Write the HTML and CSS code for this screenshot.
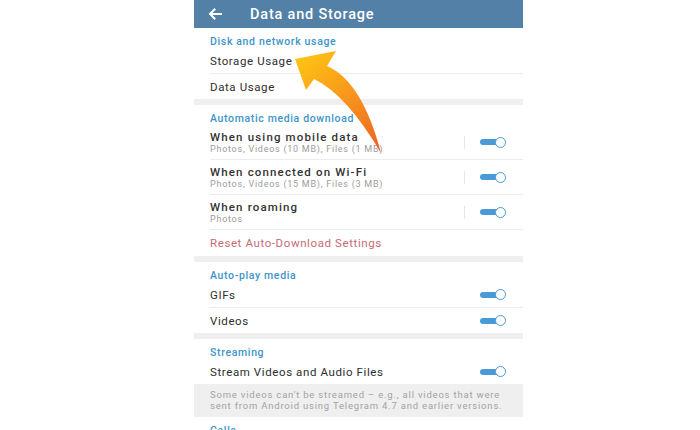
FILE: index.html
```html
<!DOCTYPE html>
<html>
<head>
<meta charset="utf-8">
<link rel="stylesheet" href="styles.css">
</head>
<body>
<div class="phone">
  <div class="appbar">
    <svg class="back" width="14" height="12" viewBox="0 0 14 12"><path d="M13 6H2M6.5 1.5L2 6l4.5 4.5" fill="none" stroke="#fff" stroke-width="2" stroke-linecap="square"/></svg>
    <span class="appbar-title">Data and Storage</span>
  </div>

  <div class="section">
    <div class="sec-title">Disk and network usage</div>
    <div class="row"><span class="label">Storage Usage</span></div>
    <div class="row last"><span class="label">Data Usage</span></div>
  </div>
  <div class="gap"></div>

  <div class="section">
    <div class="sec-title">Automatic media download</div>
    <div class="row two">
      <div class="texts"><div class="label">When using mobile data</div><div class="sub">Photos, Videos (10 MB), Files (1 MB)</div></div>
      <div class="ctrl"><span class="vsep"></span><span class="toggle"><span class="track"></span><span class="knob"></span></span></div>
    </div>
    <div class="row two">
      <div class="texts"><div class="label">When connected on Wi-Fi</div><div class="sub">Photos, Videos (15 MB), Files (3 MB)</div></div>
      <div class="ctrl"><span class="vsep"></span><span class="toggle"><span class="track"></span><span class="knob"></span></span></div>
    </div>
    <div class="row two">
      <div class="texts"><div class="label">When roaming</div><div class="sub">Photos</div></div>
      <div class="ctrl"><span class="vsep"></span><span class="toggle"><span class="track"></span><span class="knob"></span></span></div>
    </div>
    <div class="row reset last"><span class="label red">Reset Auto-Download Settings</span></div>
  </div>
  <div class="gap"></div>

  <div class="section">
    <div class="sec-title">Auto-play media</div>
    <div class="row">
      <span class="label">GIFs</span>
      <span class="toggle"><span class="track"></span><span class="knob"></span></span>
    </div>
    <div class="row last">
      <span class="label">Videos</span>
      <span class="toggle"><span class="track"></span><span class="knob"></span></span>
    </div>
  </div>
  <div class="gap"></div>

  <div class="section">
    <div class="sec-title">Streaming</div>
    <div class="row last">
      <span class="label">Stream Videos and Audio Files</span>
      <span class="toggle"><span class="track"></span><span class="knob"></span></span>
    </div>
  </div>
  <div class="info">Some videos can't be streamed – e.g., all videos that were<br>sent from Android using Telegram 4.7 and earlier versions.</div>

  <div class="section">
    <div class="sec-title calls">Calls</div>
  </div>
</div>

<svg class="arrow" width="700" height="430" viewBox="0 0 700 430">
  <defs>
    <linearGradient id="ag" gradientUnits="userSpaceOnUse" x1="300" y1="55" x2="380" y2="152">
      <stop offset="0" stop-color="#ffc414"/>
      <stop offset="0.5" stop-color="#f7951c"/>
      <stop offset="1" stop-color="#ec6224"/>
    </linearGradient>
  </defs>
  <path d="M295 59 L336 51 L327 66 Q362 81 381 153 Q346 94 314 79 L306 90 Z" fill="url(#ag)"/>
</svg>
</body>
</html>
```

FILE: styles.css
```css
html, body {
  margin: 0;
  padding: 0;
  background: #ffffff;
}
body {
  width: 700px;
  height: 430px;
  overflow: hidden;
  font-family: Roboto, "Liberation Sans", Arial, sans-serif;
}
.phone {
  margin-left: 194px;
  width: 329px;
  background: #ffffff;
}
.appbar {
  height: 28px;
  background: #5380a7;
  display: flex;
  align-items: center;
  box-shadow: 0 1px 0 #dfe8f0;
}
.back {
  margin-left: 14px;
  margin-right: 28px;
}
.appbar-title {
  color: #ffffff;
  font-size: 14.5px;
  font-weight: 500;
  letter-spacing: 0.8px;
}
.section {
  background: #ffffff;
}
.sec-title {
  padding: 8px 0 0 16px;
  line-height: 12px;
  height: 12px;
  font-size: 10.5px;
  font-weight: 500;
  letter-spacing: 0.65px;
  color: #3d94c9;
}
.row {
  height: 25px;
  margin-left: 16px;
  padding-right: 17px;
  display: flex;
  align-items: center;
  justify-content: space-between;
  border-bottom: 1px solid #ececec;
}
.row.last {
  border-bottom: none;
}
.row.two {
  height: 34px;
}
.row.reset {
  height: 26px;
}
.label {
  font-size: 11.5px;
  color: #2e2e2e;
  letter-spacing: 0.6px;
}
.label.red {
  color: #c56b75;
}
.texts {
  display: flex;
  flex-direction: column;
  padding-top: 1px;
}
.texts .label {
  line-height: 13px;
  font-weight: 500;
  color: #333333;
  letter-spacing: 1.15px;
}
.sub {
  font-size: 9px;
  line-height: 11px;
  color: #9c9c9c;
  letter-spacing: 0.75px;
}
.ctrl {
  display: flex;
  align-items: center;
  gap: 15px;
}
.vsep {
  width: 1px;
  height: 13px;
  background: #e6e6e6;
}
.toggle {
  display: flex;
  align-items: center;
}
.track {
  width: 25px;
  height: 6px;
  border-radius: 3px;
  background: #4a9ad8;
}
.knob {
  width: 9px;
  height: 9px;
  border-radius: 50%;
  background: #ffffff;
  border: 1.5px solid #4a9ad8;
  margin-left: -10px;
}
.gap {
  height: 6px;
  background: #efefef;
}
.info {
  background: #efefef;
  padding: 5px 16px 6px 16px;
  font-size: 9.5px;
  line-height: 11px;
  color: #a3a3a3;
  letter-spacing: 0.8px;
  white-space: nowrap;
}
.sec-title.calls {
  height: 8px;
  padding-top: 8px;
}
.arrow {
  position: absolute;
  left: 0;
  top: 0;
  pointer-events: none;
}
```
